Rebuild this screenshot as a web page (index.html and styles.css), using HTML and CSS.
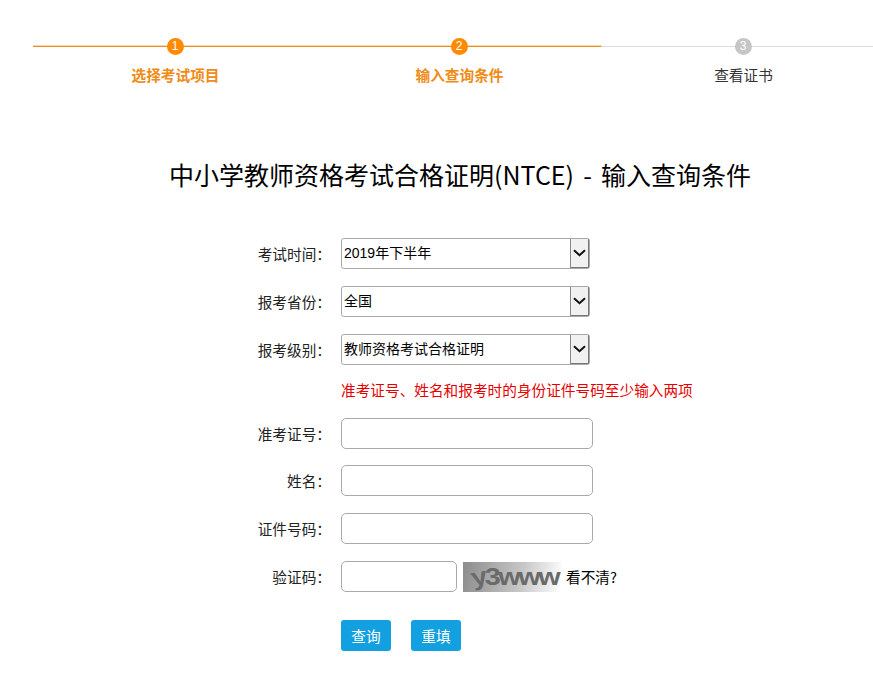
FILE: index.html
```html
<!DOCTYPE html>
<html lang="zh-CN">
<head>
<meta charset="utf-8">
<title>NTCE</title>
<link rel="stylesheet" href="styles.css">
</head>
<body>
<div class="page">
  <div class="steps">
    <div class="step done">
      <span class="dot">1</span>
      <span class="step-name">选择考试项目</span>
    </div>
    <div class="step done half">
      <span class="dot">2</span>
      <span class="step-name">输入查询条件</span>
    </div>
    <div class="step todo">
      <span class="dot">3</span>
      <span class="step-name">查看证书</span>
    </div>
  </div>

  <h1 class="title">中小学教师资格考试合格证明(NTCE) - 输入查询条件</h1>

  <form class="form">
    <div class="row">
      <label class="label">考试时间：</label>
      <div class="select">
        <span class="select-value">2019年下半年</span>
        <span class="select-btn"><svg width="13" height="8" viewBox="0 0 13 8"><path d="M1 1.2l5.5 5 5.5-5" fill="none" stroke="#111" stroke-width="2"/></svg></span>
      </div>
    </div>
    <div class="row">
      <label class="label">报考省份：</label>
      <div class="select">
        <span class="select-value">全国</span>
        <span class="select-btn"><svg width="13" height="8" viewBox="0 0 13 8"><path d="M1 1.2l5.5 5 5.5-5" fill="none" stroke="#111" stroke-width="2"/></svg></span>
      </div>
    </div>
    <div class="row">
      <label class="label">报考级别：</label>
      <div class="select">
        <span class="select-value">教师资格考试合格证明</span>
        <span class="select-btn"><svg width="13" height="8" viewBox="0 0 13 8"><path d="M1 1.2l5.5 5 5.5-5" fill="none" stroke="#111" stroke-width="2"/></svg></span>
      </div>
    </div>
    <p class="note">准考证号、姓名和报考时的身份证件号码至少输入两项</p>
    <div class="row first-input">
      <label class="label">准考证号：</label>
      <input class="input" type="text">
    </div>
    <div class="row">
      <label class="label">姓名：</label>
      <input class="input" type="text">
    </div>
    <div class="row">
      <label class="label">证件号码：</label>
      <input class="input" type="text">
    </div>
    <div class="row">
      <label class="label">验证码：</label>
      <input class="input short" type="text">
      <div class="captcha"><span class="captcha-text"><span class="captcha-y">y</span>3www</span></div>
      <a class="refresh">看不清?</a>
    </div>
    <div class="actions">
      <button class="btn" type="button">查询</button>
      <button class="btn" type="button">重填</button>
    </div>
  </form>
</div>
</body>
</html>
```
FILE: styles.css
```css
* { box-sizing: border-box; }
html, body { margin: 0; padding: 0; background: #fff; overflow: hidden; }
body { font-family: "Noto Sans CJK SC", "Liberation Sans", sans-serif; color: #000; }
.page { width: 873px; height: 685px; overflow: hidden; padding-top: 38px; }

.steps { display: flex; width: 852px; margin-left: 33px; }
.step { position: relative; width: 284px; display: flex; flex-direction: column; align-items: center; }
.step::before { content: ""; position: absolute; left: 0; right: 0; top: 7px; height: 2px; background: linear-gradient(#f8d9b4 50%, #e98c22 50%); }
.step.half::before { right: -1px; }
.step.todo::before { top: 8px; height: 1px; background: #dcdcdc; }
.dot { position: relative; z-index: 1; width: 17px; height: 17px; border-radius: 50%; background: #ff8a00; color: #fff; font-size: 12px; line-height: 17px; text-align: center; font-family: "Liberation Sans", sans-serif; font-weight: 400; }
.todo .dot { background: #c6c6c6; }
.step-name { margin-top: 10px; padding-left: 1px; font-size: 14.67px; line-height: 20px; color: #ef8b16; font-weight: 700; }
.todo .step-name { color: #333; font-weight: 400; }

.title { margin: 70px 0 0; padding-left: 47px; text-align: center; font-size: 25px; line-height: 38px; font-weight: 400; color: #000; word-spacing: 3.5px; }

.form { margin-top: 45px; padding-left: 341px; display: flex; flex-direction: column; }
.row { position: relative; display: flex; align-items: center; height: 31px; margin-bottom: 17px; }
.row.first-input { margin-bottom: 16px; }
.label { position: absolute; right: 100%; margin-right: 10px; white-space: nowrap; font-size: 14.67px; line-height: 20px; color: #222; }

.select { display: flex; width: 249px; height: 31px; border: 1px solid #a9a9a9; border-radius: 3px; background: #fff; }
.select-value { flex: 1; padding-left: 2px; line-height: 28px; font-family: "Liberation Sans", "Noto Sans CJK SC", sans-serif; font-size: 14px; }
.select-btn { width: 19px; display: flex; align-items: center; justify-content: center; background: #f1f1f1; border-left: 1px solid #888; border-right: 1px solid #777; border-bottom: 1px solid #777; }

.note { margin: 0 0 20px; height: 16px; font-size: 14.67px; line-height: 16px; color: #e60000; white-space: nowrap; }

.input { width: 252px; height: 31px; border: 1px solid #a9a9a9; border-radius: 5px; background: #fff; padding: 0 6px; }
.input.short { width: 116px; }
.captcha { width: 98px; height: 30px; margin-left: 6px; overflow: hidden; background: linear-gradient(100deg, #8c8c8c, #c8c8c8 60%, #fff); display: flex; align-items: center; }
.captcha-text { display: inline-block; transform-origin: left center; transform: scaleX(1.2); margin-left: 8px; font-family: "Liberation Sans", sans-serif; font-size: 24px; font-weight: 700; line-height: 30px; color: #6a6a6a; letter-spacing: -2px; white-space: nowrap; }
.captcha-y { display: inline-block; transform: rotate(-12deg); }
.refresh { margin-left: 5px; font-size: 14.67px; line-height: 20px; color: #000; }

.actions { display: flex; gap: 20px; margin-top: 11px; }
.btn { width: 50px; height: 31px; padding: 0; border: 0; border-radius: 3px; background: #12a0e0; color: #fff; font: 14.67px/31px "Noto Sans CJK SC", sans-serif; }
```
